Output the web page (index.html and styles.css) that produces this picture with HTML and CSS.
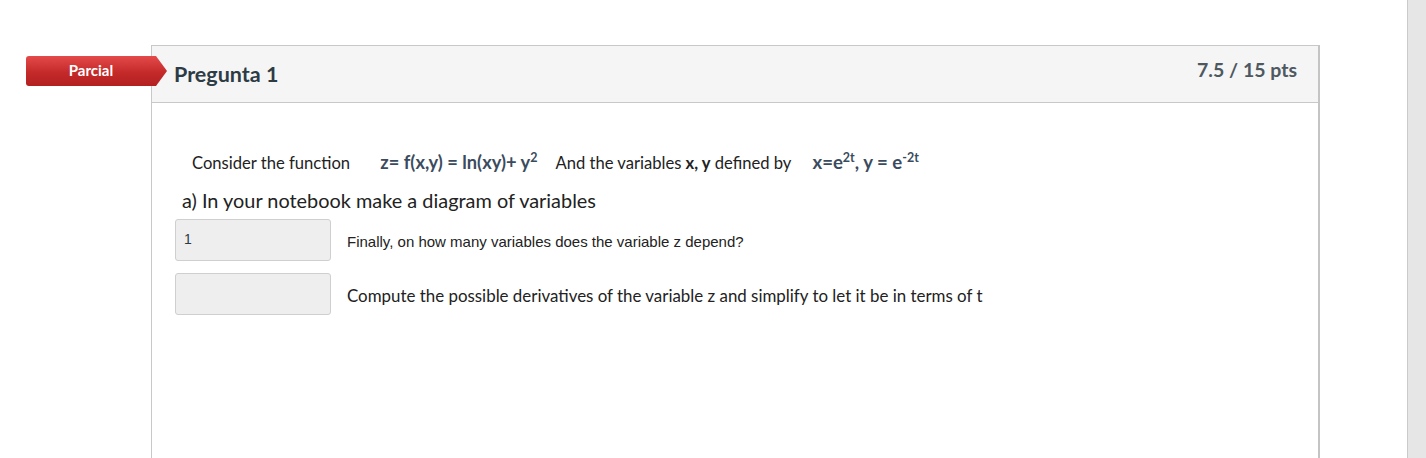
FILE: index.html
```html
<!DOCTYPE html>
<html>
<head>
<meta charset="utf-8">
<link rel="stylesheet" href="styles.css">
</head>
<body>
<div class="page">
  <main class="content">
    <div class="question">
      <div class="badge">Parcial</div>
      <div class="card">
        <div class="card-header">
          <h2 class="title">Pregunta 1</h2>
          <div class="points">7.5 / 15 pts</div>
        </div>
        <div class="card-body">
          <p class="intro">Consider the function <span class="formula f1">z= f(x,y) = ln(xy)+ y<sup>2</sup></span><span class="after">And the variables <b>x, y</b> defined by</span><span class="formula f2">x=e<sup>2t</sup>, y = e<sup>-2t</sup></span></p>
          <p class="part">a) In your notebook make a diagram of variables</p>
          <div class="answer">
            <div class="box">1</div>
            <span class="q-arial">Finally, on how many variables does the variable z depend?</span>
          </div>
          <div class="answer">
            <div class="box"></div>
            <span class="q-lato">Compute the possible derivatives of the variable z and simplify to let it be in terms of t</span>
          </div>
        </div>
      </div>
    </div>
  </main>
  <aside class="scrollbar"></aside>
</div>
</body>
</html>
```
FILE: styles.css
```css
html, body {
  margin: 0;
  padding: 0;
  height: 458px;
  overflow: hidden;
  background: #fff;
  font-family: "Lato", "Liberation Sans", sans-serif;
}

.page {
  display: flex;
  height: 458px;
}

.content {
  flex: 1;
  background: #fff;
}

.scrollbar {
  width: 18px;
  background: #e6e6e6;
  border-left: 1px solid #cacaca;
}

.question {
  position: relative;
  padding-top: 45px;
  padding-left: 151px;
}

.badge {
  position: absolute;
  left: 26px;
  top: 56px;
  width: 141px;
  height: 30px;
  box-sizing: border-box;
  padding-right: 11px;
  padding-bottom: 3px;
  display: flex;
  align-items: center;
  justify-content: center;
  color: #fff;
  font-weight: 700;
  font-size: 15px;
  background: linear-gradient(#e54a4a, #c42a2a 55%, #b32020);
  border-radius: 3px 0 0 3px;
  clip-path: polygon(0 0, 130px 0, 141px 50%, 130px 100%, 0 100%);
  z-index: 2;
}

.card {
  width: 1169px;
  height: 500px;
  box-sizing: border-box;
  border: 1px solid #c8c8c8;
  border-right: 2px solid #c4c4c4;
  background: #fff;
}

.card-header {
  height: 56px;
  background: #f5f5f5;
  border-bottom: 1px solid #c8c8c8;
  display: flex;
  justify-content: space-between;
  align-items: flex-start;
  padding: 0 21px 0 22px;
}

.title {
  margin: 16px 0 0;
  font-size: 21.5px;
  line-height: 25px;
  font-weight: 700;
  color: #2d3b45;
}

.points {
  margin-top: 12px;
  font-size: 19.5px;
  line-height: 23px;
  font-weight: 700;
  color: #4e5861;
}

.card-body {
  padding: 47px 24px 0 24px;
  color: #222;
}

.intro {
  margin: 0;
  padding-left: 16px;
  font-size: 16.6px;
  line-height: 24px;
  white-space: nowrap;
}

.intro b {
  font-weight: 700;
}

.formula {
  font-weight: 700;
  color: #3b4b5e;
  font-size: 18.3px;
}

.f1 {
  margin-left: 26px;
}

.after {
  margin-left: 18px;
}

.f2 {
  margin-left: 21px;
  font-size: 18.6px;
}

sup {
  font-size: 12.5px;
  line-height: 0;
  vertical-align: 7px;
}

.part {
  margin: 11px 0 0;
  padding-left: 6px;
  font-size: 19.9px;
  line-height: 28px;
}

.answer {
  display: flex;
  align-items: center;
  gap: 16px;
  margin-top: 5px;
}

.answer + .answer {
  margin-top: 12px;
}

.box {
  width: 156px;
  height: 42px;
  margin-left: -1px;
  box-sizing: border-box;
  background: #eeeeee;
  border: 1px solid #cfcfcf;
  border-radius: 3px;
  padding: 11px 0 0 8px;
  font-family: "Liberation Sans", Arial, sans-serif;
  font-size: 14px;
  color: #2d3b45;
}

.q-arial {
  font-family: "Liberation Sans", Arial, sans-serif;
  font-size: 15px;
  color: #222;
  padding-top: 3px;
}

.q-lato {
  font-size: 16.9px;
  color: #222;
  padding-top: 3px;
}
```
